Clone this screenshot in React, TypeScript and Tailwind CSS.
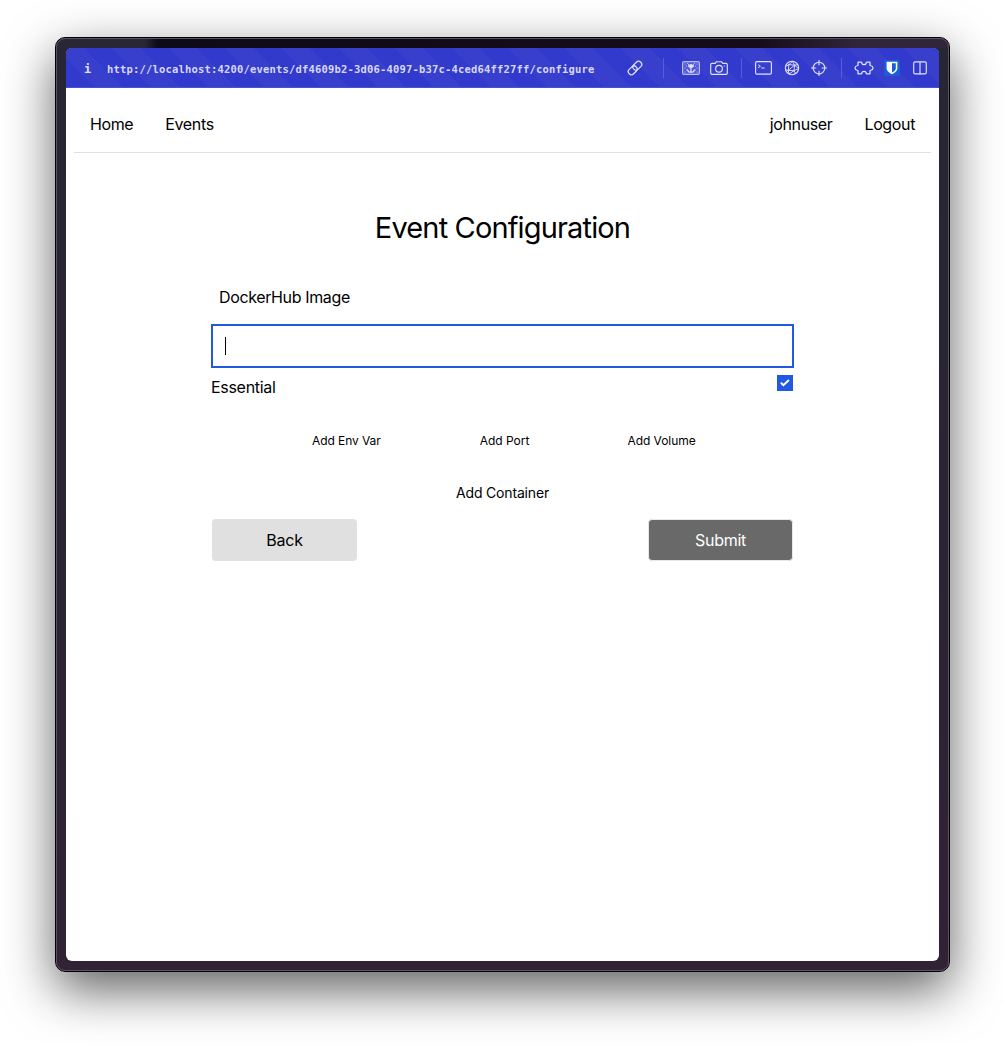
import React from "react";

const stroke = {
  fill: "none",
  stroke: "#dfe1fb",
  strokeWidth: 1.15,
  strokeLinecap: "round" as const,
  strokeLinejoin: "round" as const,
};

function LinkIcon() {
  return (
    <svg width="16" height="16" viewBox="0 0 16 16" {...stroke} strokeWidth="1.250">
      <rect x="-4.900" y="-3.100" width="9.800" height="6.200" rx="3.100" transform="translate(10.300 5.700) rotate(-45)" />
      <rect x="-4.900" y="-3.100" width="9.800" height="6.200" rx="3.100" transform="translate(5.700 10.300) rotate(-45)" />
    </svg>
  );
}

function PictureIcon() {
  return (
    <svg width="18" height="14" viewBox="0 0 18 14" {...stroke}>
      <rect x=".6" y=".6" width="16.800" height="12.800" rx="1.500" fill="#5459d8" stroke="#b9bcf3" />
      <path d="M3 3h.1M5.500 2.500h.1M12.500 2.500h.1M15 3h.1M4.500 5h.1M13.500 5h.1M3 7h.1M15 7h.1M4.500 9h.1M13.500 9h.1M3 11h.1M15 11h.1" stroke="#b9bcf3" />
      <path d="M6.600 3.300v2.500Q9 8 11.400 5.800V3.300L10.200 4.300 9 3 7.800 4.300Z" fill="#dfe1fb" strokeWidth=".7" />
      <path d="M9 7v4M5.500 8.800C6 10.800 7.400 11.200 9 11.200s3-.4 3.500-2.400" />
    </svg>
  );
}

function CameraIcon() {
  return (
    <svg width="18" height="14" viewBox="0 0 18 14" {...stroke}>
      <path d="M2 2.400h3.200L6.500.7h5l1.300 1.700H16q1.300 0 1.300 1.300V12q0 1.300-1.300 1.300H2Q.7 13.300.7 12V3.700Q.7 2.400 2 2.400Z" />
      <circle cx="9" cy="7.700" r="3.400" />
      <path d="M14.200 5h.3" />
    </svg>
  );
}

function TerminalIcon() {
  return (
    <svg width="17" height="14" viewBox="0 0 17 14" {...stroke}>
      <rect x=".6" y=".6" width="15.800" height="12.500" rx="1.300" />
      <path d="M3.500 4l1.900 1.200-1.900 1.300M6.600 7h2.600" strokeWidth="1" />
    </svg>
  );
}

function NetworkIcon() {
  return (
    <svg width="16" height="16" viewBox="0 0 16 16" {...stroke} strokeWidth=".95">
      <circle cx="8" cy="8" r="6.700" strokeWidth="1.100" />
      <path d="M8.500 1.300 5 4.600 1.400 6.500M5 4.600l5.500.6 3.200-.5M10.500 5.200 8.500 1.300M5 4.600 4.200 10.500 10 10.600 10.500 5.200 4.200 10.500 1.500 9.500M10 10.600l4.600-2L10.500 5.200M4.200 10.500l1 3.500L10 10.600l1.500 3" />
    </svg>
  );
}

function TargetIcon() {
  return (
    <svg width="16" height="16" viewBox="0 0 16 16" {...stroke}>
      <circle cx="8" cy="8" r="5.800" />
      <path d="M8 .5v4.300M8 11.200v4.300M.5 8h4.300M11.200 8h4.300" />
    </svg>
  );
}

function PuzzleIcon() {
  return (
    <svg width="20" height="14" viewBox="0 0 20 14" {...stroke} strokeWidth="1.250">
      <path d="M4 1.200h3c1 0 .8.900 1 1.500Q10 4.700 12 2.700C12.200 2.100 12 1.200 13 1.200h3v3.200c.5.700 3-.2 3 2.600s-2.500 1.900-3 2.600v3.200h-3c-1 0-.8-.9-1-1.500Q10 9.300 8 11.300C7.800 11.900 8 12.800 7 12.800H4V9.600C3.500 8.900 1 9.800 1 7s2.500-1.900 3-2.600Z" />
    </svg>
  );
}

function ShieldIcon() {
  return (
    <svg width="16" height="16" viewBox="0 0 16 16">
      <rect width="16" height="16" rx="2" fill="#175ddc" />
      <path d="M2.600 1.800h10.800v6.400C13.400 11 10.500 13 8 14.300 5.500 13 2.600 11 2.600 8.200Z" fill="#fff" />
      <path d="M8 3.300h3.800v4.900c0 1.700-1.700 3.200-3.800 4.400Z" fill="#175ddc" />
    </svg>
  );
}

function SplitIcon() {
  return (
    <svg width="14" height="14" viewBox="0 0 14 14" {...stroke}>
      <rect x=".7" y=".9" width="12.600" height="12" rx="1.300" />
      <path d="M7 1v12" />
    </svg>
  );
}

function AddressBar() {
  return (
    <header className="flex h-10 shrink-0 items-center border-b border-[#4a50d3] bg-[#3239cd] bg-[repeating-linear-gradient(45deg,#3239cd_0px,#3239cd_20px,#383fcc_20px,#383fcc_40px)] pt-px pr-[11px] pl-[18px]">
      <span className="w-[23px] pt-[2px] font-['DejaVu_Sans_Mono',monospace] text-[12px] font-bold text-[#dfe1fb]">i</span>
      <span className="w-[520px] whitespace-nowrap pt-[3px] font-['DejaVu_Sans_Mono',monospace] text-[10.500px] font-bold tracking-[0.180px] text-[#d6d8f8]">
        http://localhost:4200/events/df4609b2-3d06-4097-b37c-4ced64ff27ff/configure
      </span>
      <LinkIcon />
      <i className="ml-5 h-5 w-px bg-[#555ce0]" />
      <div className="ml-[18px] flex items-center gap-[10px]"><PictureIcon /><CameraIcon /></div>
      <i className="ml-[13px] h-5 w-px bg-[#555ce0]" />
      <div className="ml-[13px] flex items-center"><TerminalIcon /><span className="ml-3"><NetworkIcon /></span><span className="ml-[11px]"><TargetIcon /></span></div>
      <i className="ml-[14px] h-5 w-px bg-[#555ce0]" />
      <div className="ml-3 flex items-center"><PuzzleIcon /><span className="ml-[10px]"><ShieldIcon /></span><span className="ml-[13px]"><SplitIcon /></span></div>
    </header>
  );
}

export default function App() {
  return (
    <div className="h-[1045px] w-[1005px] overflow-hidden bg-white px-[55px] pt-[37px] font-['Inter',sans-serif] text-black">
      <div className="h-[935px] w-[895px] rounded-[10px] border border-black bg-[linear-gradient(180deg,#262634,#2c2335_60%,#312236)] shadow-[0_18px_50px_rgba(0,0,0,0.62)]">
        <div className="h-full rounded-[9px] border border-[#5b535f] bg-[linear-gradient(90deg,#272735_0,#272735_88px,#0e0b18_100px,#160c19_700px,#30253a_800px)] bg-[length:100%_9px] bg-no-repeat px-[9px] pt-[9px] pb-[9px]">
          <div className="flex h-full flex-col overflow-hidden rounded-md bg-white">
            <AddressBar />
            <nav className="mx-2 flex h-[65px] items-center justify-between border-b border-[#e0e0e0] px-4 pt-[7px] text-[16px] leading-6">
              <div className="flex gap-8"><a className="tracking-[-0.400px]">Home</a><a className="tracking-[-0.350px]">Events</a></div>
              <div className="flex gap-8"><a className="tracking-[-0.370px]">johnuser</a><a className="tracking-[-0.370px]">Logout</a></div>
            </nav>
            <main className="mx-auto w-[583px] pt-[57px]">
              <h1 className="text-center text-[29px] leading-9 tracking-[-0.850px]">Event Configuration</h1>
              <label className="mt-[39px] ml-2 block text-[16px] leading-6 tracking-[-0.370px]">DockerHub Image</label>
              <div className="mt-[15px] flex h-11 items-center border-2 border-[#2159e3] px-3">
                <span className="h-[18px] w-px bg-black" />
              </div>
              <div className="flex justify-between pt-[7px] pr-px">
                <span className="text-[16px] leading-6 tracking-[-0.300px]">Essential</span>
                <span className="flex size-4 items-center justify-center bg-[#2159e3]">
                  <svg width="10" height="8" viewBox="0 0 10 8" fill="none" stroke="white" strokeWidth="2" strokeLinecap="round"><path d="m1.400 4.200 2 2L8.400 1.600" /></svg>
                </span>
              </div>
              <div className="mt-[34px] flex pl-[101px] text-[12px] leading-4">
                <button className="tracking-[-0.080px]">Add Env Var</button>
                <button className="ml-[99px]">Add Port</button>
                <button className="ml-[98px] tracking-[-0.060px]">Add Volume</button>
              </div>
              <button className="mx-auto mt-[34px] block text-[14px] leading-5 tracking-[-0.170px]">Add Container</button>
              <div className="mt-[16px] flex items-start justify-between px-px text-[16px]">
                <button className="h-[42px] w-[145px] rounded bg-[#e0e0e0] tracking-[-0.270px]">Back</button>
                <button className="h-[42px] w-[145px] rounded border border-[#e5e7eb] bg-[#696969] tracking-[-0.270px] text-white">Submit</button>
              </div>
            </main>
          </div>
        </div>
      </div>
    </div>
  );
}
